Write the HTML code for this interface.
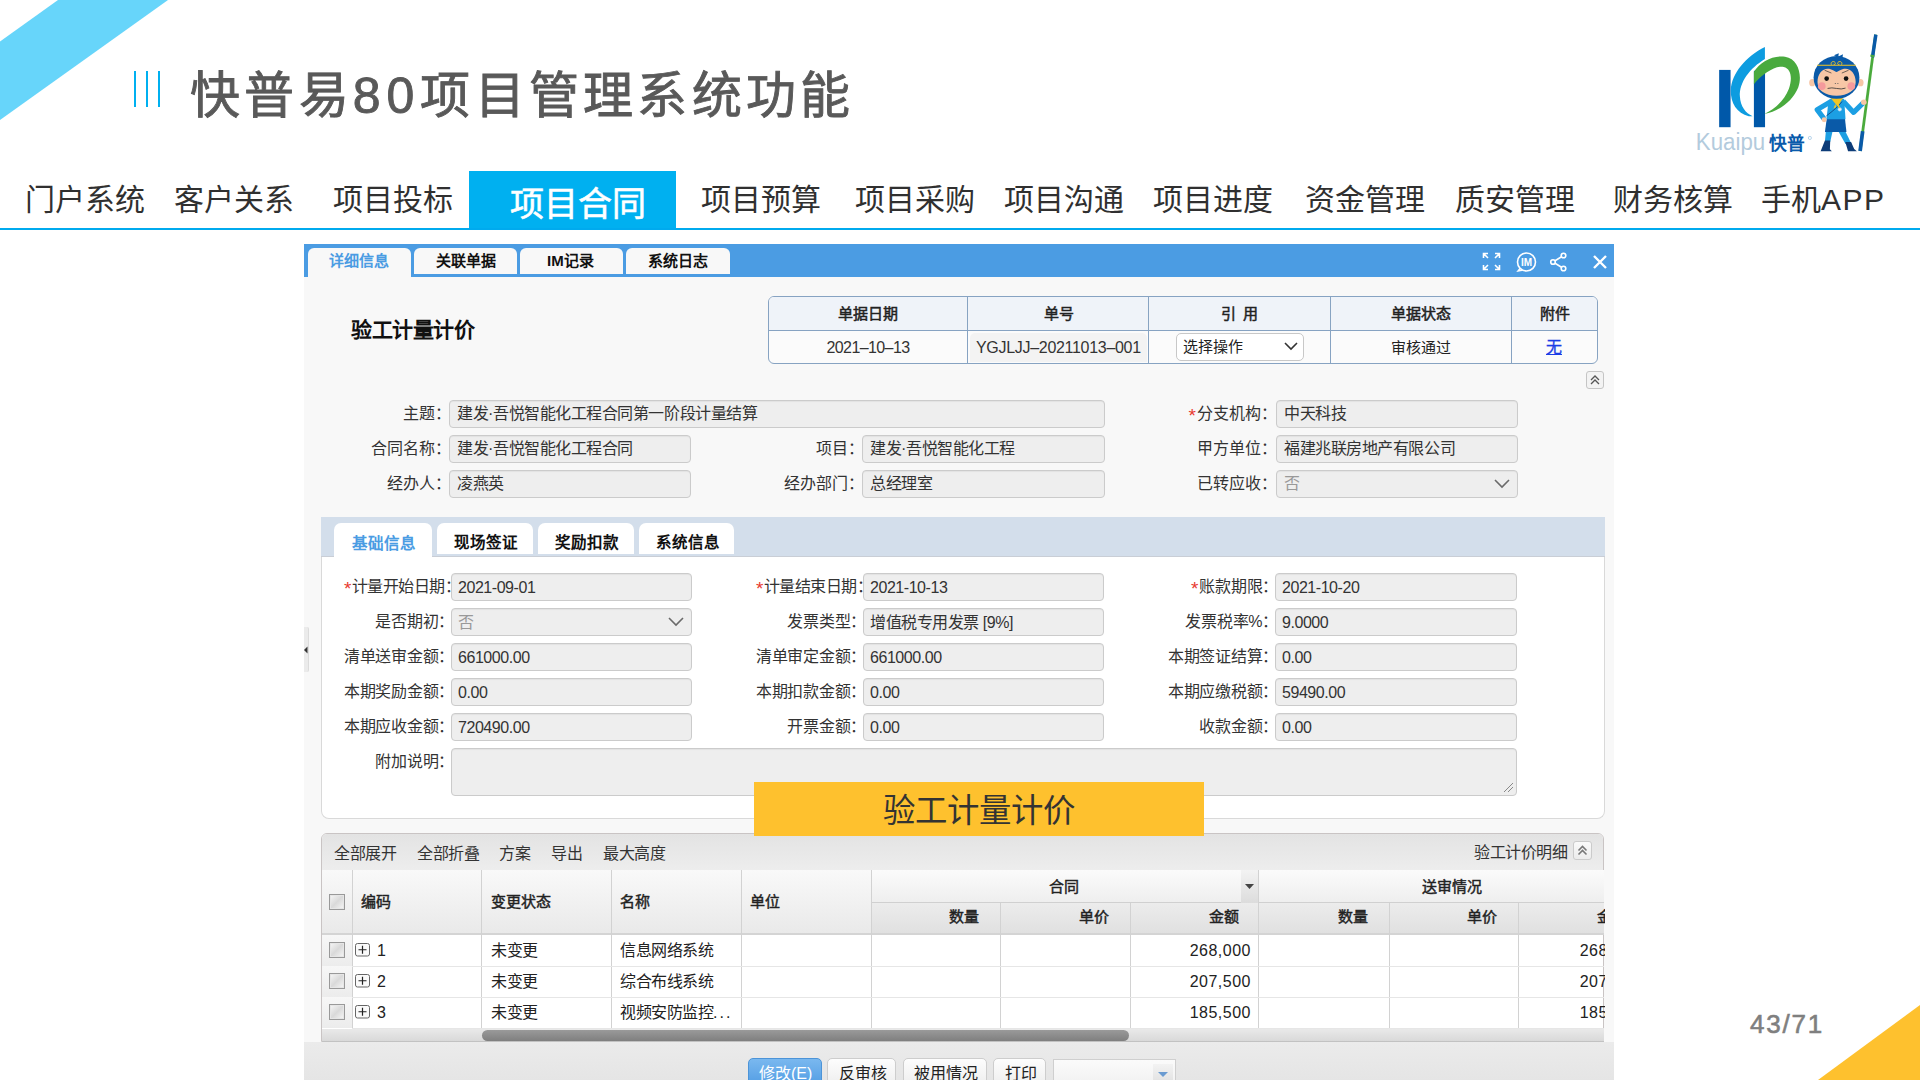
<!DOCTYPE html>
<html lang="zh-CN">
<head>
<meta charset="utf-8">
<title>slide</title>
<style>
html,body{margin:0;padding:0;width:1920px;height:1080px;overflow:hidden;background:#fff;font-family:"Liberation Sans",sans-serif;}
.a{position:absolute;white-space:nowrap;line-height:1;}
.nav{position:absolute;top:184px;font-size:30px;color:#303030;line-height:32px;}

.sc{position:absolute;left:304px;top:244px;width:1310px;height:836px;background:#f8f8f8;overflow:hidden;}
.pg{position:absolute;left:-304px;top:-244px;width:1920px;height:1080px;}
.t{position:absolute;white-space:nowrap;line-height:1;}
.tab1{position:absolute;top:248px;height:26px;background:#f8f8f8;border-radius:6px 6px 0 0;}
.tb{position:absolute;white-space:nowrap;top:254px;font-size:15px;font-weight:bold;color:#111;line-height:14px;}
.ht{position:absolute;white-space:nowrap;font-size:15px;font-weight:400;-webkit-text-stroke:0.5px #222;color:#222;line-height:15px;text-align:center;}
.lb{position:absolute;white-space:nowrap;font-size:16px;letter-spacing:-0.25px;color:#333;line-height:15px;text-align:right;}
.in{position:absolute;background:#eeeeee;border:1px solid #cbcbcb;box-shadow:inset 0 1px 1px rgba(0,0,0,0.05);border-radius:4px;box-sizing:border-box;}
.iv{position:absolute;white-space:nowrap;font-size:16px;letter-spacing:-0.45px;color:#333;line-height:15px;}
.rq{color:#e8392f;font-size:19px;line-height:10px;position:relative;top:3px;margin-right:1px}
.gh{position:absolute;background:linear-gradient(#f9f9f9,#e9e9e9);}
.gh2{position:absolute;background:linear-gradient(#ececec,#e0e0e0);}
.vl{position:absolute;width:1px;background:#d2d2d2;}
.hl{position:absolute;height:1px;background:#e6e6e6;}
.gt{position:absolute;white-space:nowrap;font-size:16px;letter-spacing:-0.5px;line-height:15px;color:#222;}
.gb{position:absolute;white-space:nowrap;font-size:15px;line-height:15px;color:#222;font-weight:400;-webkit-text-stroke:0.45px #222;}
.cb{position:absolute;width:16px;height:16px;border:1px solid #999;box-sizing:border-box;background:linear-gradient(135deg,#f7f7f7,#d9d9d9 50%,#f7f7f7);box-shadow:inset 0 0 0 1px #e6e6e6;}
.btn{position:absolute;top:1058px;height:30px;border:1px solid #cdcdcd;border-radius:5px;box-sizing:border-box;background:linear-gradient(#fdfdfd,#ededed);}
.bt{position:absolute;top:1066px;white-space:nowrap;font-size:16px;line-height:16px;color:#222;}
</style>
</head>
<body>
<!-- top-left blue band -->
<svg class="a" style="left:0;top:0" width="200" height="140"><polygon points="58,0 168,0 0,120 0,41.5" fill="#67d5fa"/></svg>
<!-- bottom-right yellow triangle -->
<svg class="a" style="left:1800px;top:990px" width="120" height="90"><polygon points="18,90 120,15 120,90" fill="#fec12e"/></svg>
<!-- title bars -->
<div class="a" style="left:134px;top:71px;width:2px;height:36px;background:#00b0f0"></div>
<div class="a" style="left:146px;top:71px;width:2px;height:36px;background:#00b0f0"></div>
<div class="a" style="left:158px;top:71px;width:2px;height:36px;background:#00b0f0"></div>
<div class="a" id="title" style="left:190px;top:71px;font-size:50px;font-weight:400;-webkit-text-stroke:0.9px #595959;color:#595959;letter-spacing:4.25px;">快普易<span style="letter-spacing:6px">80</span>项目管理系统功能</div>

<!-- nav -->
<div class="nav" style="left:25px">门户系统</div>
<div class="nav" style="left:174px">客户关系</div>
<div class="nav" style="left:333px">项目投标</div>
<div class="a" style="left:469px;top:171px;width:207px;height:57px;background:#00b0f0"></div>
<div class="nav" style="left:510px;top:186px;font-size:34px;color:#fff;line-height:36px;-webkit-text-stroke:0.6px #fff">项目合同</div>
<div class="nav" style="left:701px">项目预算</div>
<div class="nav" style="left:855px">项目采购</div>
<div class="nav" style="left:1004px">项目沟通</div>
<div class="nav" style="left:1153px">项目进度</div>
<div class="nav" style="left:1305px">资金管理</div>
<div class="nav" style="left:1455px">质安管理</div>
<div class="nav" style="left:1613px">财务核算</div>
<div class="nav" style="left:1761px">手机<span style="letter-spacing:1.5px">APP</span></div>
<div class="a" style="left:0;top:228px;width:1920px;height:2px;background:#00aaee"></div>

<!-- logo -->
<svg class="a" style="left:1680px;top:20px" width="220" height="140" viewBox="0 0 1697 1080">
 <rect x="302" y="385" width="88" height="442" fill="#0058a9"/>
 <path d="M655 208 L655 300 C540 370 455 480 462 590 C466 665 505 718 560 742 L530 742 C440 720 388 640 392 540 C398 410 510 280 655 208 Z" fill="#0d9ce0"/>
 <rect x="570" y="392" width="86" height="435" fill="#0058a9"/>
 <path d="M570 400 L570 495 C640 410 740 350 800 362 C858 376 868 450 840 530 C805 620 730 690 650 725 C770 705 870 620 912 520 C945 430 915 300 810 283 C720 270 620 320 570 400 Z" fill="#49aa3e"/>
 <text x="122" y="1004" font-family="Liberation Sans" font-size="180" fill="#b3cbdd" textLength="535" lengthAdjust="spacingAndGlyphs">Kuaipu</text>
 <text x="690" y="1004" font-family="Liberation Sans" font-weight="bold" font-size="138" fill="#0a5bab" textLength="275" lengthAdjust="spacingAndGlyphs">快普</text>
 <circle cx="1002" cy="910" r="12" fill="none" stroke="#7ab0d8" stroke-width="4"/>
</svg>
<svg class="a" style="left:1805px;top:30px" width="80" height="125" viewBox="0 0 691 1080">
 <path d="M610 40 L476 1045" stroke="#4aaa3c" stroke-width="24"/>
 <path d="M612 40 L583 235" stroke="#0a5aa8" stroke-width="30"/>
 <path d="M583 215 L580 232" stroke="#4aaa3c" stroke-width="34"/>
 <path d="M498 875 L476 1045" stroke="#0a5aa8" stroke-width="32"/>
 <path d="M180 875 L238 875 L218 965 L172 965 Z" fill="#1c9fe3"/>
 <path d="M288 875 L348 875 L402 985 L350 985 Z" fill="#1c9fe3"/>
 <path d="M172 955 L218 955 L215 1030 L232 1048 L135 1048 Z" fill="#0d3c78"/>
 <path d="M348 968 L398 968 L425 1028 L448 1048 L372 1048 Z" fill="#0d3c78"/>
 <path d="M188 765 L345 765 L358 882 L172 882 Z" fill="#0a5aa8"/>
 <path d="M215 595 L338 595 L350 772 L185 772 L200 640 Z" fill="#1c9fe3"/>
 <path d="M225 618 L105 688 L165 768" stroke="#1c9fe3" stroke-width="44" fill="none" stroke-linejoin="round"/>
 <path d="M330 615 L420 712 L505 628" stroke="#1c9fe3" stroke-width="44" fill="none" stroke-linejoin="round"/>
 <path d="M320 618 C290 660 240 700 185 742" stroke="#0d3c78" stroke-width="7" fill="none"/>
 <circle cx="300" cy="685" r="16" fill="#e6f3fb" stroke="#8cc7ea" stroke-width="4"/>
 <circle cx="508" cy="625" r="24" fill="#f7c6a6"/>
 <circle cx="165" cy="775" r="21" fill="#f7c6a6"/>
 <path d="M222 588 L328 588 L282 660 Z" fill="#f3c623"/>
 <path d="M262 640 L245 680 L270 665 Z M290 640 L305 680 L282 665 Z" fill="#f3c623"/>
 <ellipse cx="62" cy="455" rx="26" ry="32" fill="#f7c6a6"/>
 <ellipse cx="480" cy="455" rx="26" ry="32" fill="#f7c6a6"/>
 <path d="M250 218 L292 200 L288 228 L328 210 L322 250 Z" fill="#0a5aa8"/>
 <ellipse cx="272" cy="410" rx="198" ry="185" fill="#0a5aa8"/>
 <path d="M108 450 C108 380 150 335 195 335 C235 335 255 360 272 362 C290 360 310 335 350 335 C395 335 438 380 438 450 C438 525 370 568 272 568 C175 568 108 525 108 450 Z" fill="#f7c6a6"/>
 <circle cx="145" cy="485" r="33" fill="#f59a9c"/>
 <circle cx="400" cy="485" r="33" fill="#f59a9c"/>
 <circle cx="187" cy="420" r="20" fill="#111"/>
 <circle cx="355" cy="420" r="20" fill="#111"/>
 <path d="M170 348 L228 372 M318 372 L376 348" stroke="#333" stroke-width="6"/>
 <circle cx="262" cy="462" r="5" fill="#555"/><circle cx="284" cy="462" r="5" fill="#555"/>
 <path d="M195 505 Q230 495 272 505 Q315 515 350 502" stroke="#333" stroke-width="7" fill="none"/>
 <path d="M105 305 L438 305" stroke="#f3c623" stroke-width="9"/>
 <path d="M228 300 C215 270 260 262 262 288 C262 300 250 302 246 292 M316 300 C330 270 285 262 282 288 C282 300 295 302 299 292" stroke="#f3c623" stroke-width="8" fill="none"/>
</svg>
<!-- page number -->
<div class="a" style="left:1750px;top:1011px;font-size:26px;color:#7f7f7f;letter-spacing:1.8px;-webkit-text-stroke:0.6px #7f7f7f">43/71</div>

<!-- screenshot -->
<div class="sc" id="sc">
<div class="pg">
<!-- header bar -->
<div class="t" style="left:304px;top:244px;width:1310px;height:33px;background:#4b9ce3"></div>
<div class="tab1" style="left:308px;width:103px;height:30px"></div>
<div class="tab1" style="left:414px;width:103px;height:26px"></div>
<div class="tab1" style="left:520px;width:103px;height:26px"></div>
<div class="tab1" style="left:626px;width:104px;height:26px"></div>
<div class="tb" style="left:329px;color:#4b9ce3">详细信息</div>
<div class="tb" style="left:436px">关联单据</div>
<div class="tb" style="left:547px">IM记录</div>
<div class="tb" style="left:648px">系统日志</div>
<!-- header icons -->
<svg class="t" style="left:1480px;top:250px" width="135" height="24" viewBox="0 0 135 24">
 <g fill="none" stroke="#fff" stroke-width="1.6">
  <path d="M3.5 8V3.5H8 M3.5 3.5l4.5 4.5 M15 3.5h4.5V8 M19.5 3.5l-4.5 4.5 M3.5 15v4.5H8 M3.5 19.5l4.5-4.5 M19.5 15v4.5H15 M19.5 19.5l-4.5-4.5"/>
  <circle cx="46.5" cy="12" r="9"/><path d="M40 18.5l-2 2.5 4-0.8" stroke-width="1.4"/>
  <path d="M83.5 5.5L73 12l10.5 6.5"/>
  <circle cx="83.5" cy="5.5" r="2.3" fill="#4b9ce3"/>
  <circle cx="73" cy="12" r="2.3" fill="#4b9ce3"/>
  <circle cx="83.5" cy="18.5" r="2.3" fill="#4b9ce3"/>
  <path d="M114 6l12 12 M126 6l-12 12" stroke-width="2.4"/>
 </g>
 <text x="46.5" y="16" font-family="Liberation Sans" font-weight="bold" font-size="10" fill="#fff" text-anchor="middle">IM</text>
</svg>
<!-- title -->
<div class="t" style="left:351px;top:319px;font-size:21px;letter-spacing:-0.4px;font-weight:bold;color:#111">验工计量计价</div>
<!-- header table -->
<div class="t" style="left:768px;top:296px;width:830px;height:68px;border:1px solid #87a3c2;border-radius:6px;box-sizing:border-box;background:#fbfbfb;overflow:hidden">
 <div style="position:absolute;left:0;top:0;width:830px;height:33px;background:#eff3f9;border-bottom:1px solid #87a3c2"></div>
 <div style="position:absolute;left:198px;top:0;width:1px;height:68px;background:#87a3c2"></div>
 <div style="position:absolute;left:379px;top:0;width:1px;height:68px;background:#87a3c2"></div>
 <div style="position:absolute;left:561px;top:0;width:1px;height:68px;background:#87a3c2"></div>
 <div style="position:absolute;left:742px;top:0;width:1px;height:68px;background:#87a3c2"></div>
</div>
<div class="ht" style="left:768px;top:306px;width:200px">单据日期</div>
<div class="ht" style="left:968px;top:306px;width:181px">单号</div>
<div class="ht" style="left:1149px;top:306px;width:181px">引<span style="letter-spacing:3px"> </span>用</div>
<div class="ht" style="left:1330px;top:306px;width:181px">单据状态</div>
<div class="ht" style="left:1511px;top:306px;width:87px">附件</div>
<div class="t" style="left:768px;top:340px;width:200px;text-align:center;font-size:16px;letter-spacing:-0.6px;color:#333">2021–10–13</div>
<div class="t" style="left:970px;top:333px;width:177px;height:29px;background:#f3f3f3;border-radius:5px 5px 0 0"></div>
<div class="t" style="left:976px;top:340px;font-size:16px;letter-spacing:-0.3px;color:#333">YGJLJJ–20211013–001</div>
<div class="t" style="left:1176px;top:333px;width:128px;height:28px;background:#fff;border:1px solid #c8c8c8;border-radius:5px;box-sizing:border-box"></div>
<div class="t" style="left:1183px;top:339px;font-size:15px;color:#222">选择操作</div>
<svg class="t" style="left:1283px;top:340px" width="16" height="12"><path d="M2 3l6 6 6-6" fill="none" stroke="#333" stroke-width="1.6"/></svg>
<div class="t" style="left:1330px;top:340px;width:181px;text-align:center;font-size:15px;color:#222">审核通过</div>
<div class="t" style="left:1546px;top:340px;font-size:16px;color:#1a3de6;text-decoration:underline;-webkit-text-stroke:0.3px #1a3de6">无</div>
<!-- collapse icon -->
<div class="t" style="left:1586px;top:371px;width:18px;height:18px;border:1px solid #c5c5c5;border-radius:3px;box-sizing:border-box;background:#f3f3f3"></div>
<svg class="t" style="left:1586px;top:371px" width="18" height="18"><path d="M5 9l4-4 4 4 M5 13l4-4 4 4" fill="none" stroke="#555" stroke-width="1.3"/></svg>

<!-- section 1 form -->
<div class="lb" style="left:311px;width:140px;top:406px;letter-spacing:0">主题：</div>
<div class="in" style="left:449px;top:400px;width:656px;height:28px"></div>
<div class="iv" style="left:457px;top:406px">建发·吾悦智能化工程合同第一阶段计量结算</div>
<div class="lb" style="left:1137px;width:140px;top:406px;letter-spacing:0"><span class="rq">*</span>分支机构：</div>
<div class="in" style="left:1276px;top:400px;width:242px;height:28px"></div>
<div class="iv" style="left:1284px;top:406px">中天科技</div>

<div class="lb" style="left:311px;width:140px;top:441px;letter-spacing:0">合同名称：</div>
<div class="in" style="left:449px;top:435px;width:242px;height:28px"></div>
<div class="iv" style="left:457px;top:441px">建发·吾悦智能化工程合同</div>
<div class="lb" style="left:724px;width:140px;top:441px;letter-spacing:0">项目：</div>
<div class="in" style="left:862px;top:435px;width:243px;height:28px"></div>
<div class="iv" style="left:870px;top:441px">建发·吾悦智能化工程</div>
<div class="lb" style="left:1137px;width:140px;top:441px;letter-spacing:0">甲方单位：</div>
<div class="in" style="left:1276px;top:435px;width:242px;height:28px"></div>
<div class="iv" style="left:1284px;top:441px">福建兆联房地产有限公司</div>

<div class="lb" style="left:311px;width:140px;top:476px;letter-spacing:0">经办人：</div>
<div class="in" style="left:449px;top:470px;width:242px;height:28px"></div>
<div class="iv" style="left:457px;top:476px">凌燕英</div>
<div class="lb" style="left:724px;width:140px;top:476px;letter-spacing:0">经办部门：</div>
<div class="in" style="left:862px;top:470px;width:243px;height:28px"></div>
<div class="iv" style="left:870px;top:476px">总经理室</div>
<div class="lb" style="left:1137px;width:140px;top:476px;letter-spacing:0">已转应收：</div>
<div class="in" style="left:1276px;top:470px;width:242px;height:28px"></div>
<div class="iv" style="left:1284px;top:476px;color:#999">否</div>
<svg class="t" style="left:1493px;top:476px" width="18" height="14"><path d="M2 4l7 7 7-7" fill="none" stroke="#6a6a6a" stroke-width="1.6"/></svg>
<!-- section 2 -->
<div class="t" style="left:321px;top:517px;width:1284px;height:40px;background:#d3deeb;border-bottom:1px solid #c9ced6;box-sizing:border-box"></div>
<div class="t" style="left:334px;top:523px;width:98px;height:35px;background:#fff;border-radius:7px 7px 0 0"></div>
<div class="t" style="left:437px;top:523px;width:96px;height:31px;background:#fff;border-radius:7px 7px 0 0"></div>
<div class="t" style="left:538px;top:523px;width:96px;height:31px;background:#fff;border-radius:7px 7px 0 0"></div>
<div class="t" style="left:639px;top:523px;width:95px;height:31px;background:#fff;border-radius:7px 7px 0 0"></div>
<div class="t" style="left:352px;top:536px;font-size:15.5px;font-weight:bold;color:#4b9ce3">基础信息</div>
<div class="t" style="left:454px;top:535px;font-size:15.5px;font-weight:bold;color:#111">现场签证</div>
<div class="t" style="left:555px;top:535px;font-size:15.5px;font-weight:bold;color:#111">奖励扣款</div>
<div class="t" style="left:656px;top:535px;font-size:15.5px;font-weight:bold;color:#111">系统信息</div>
<div class="t" style="left:321px;top:557px;width:1284px;height:262px;background:#fff;border:1px solid #d9d9d9;border-top:none;border-radius:0 0 8px 8px;box-sizing:border-box"></div>
<div class="t" style="left:334px;top:556px;width:98px;height:2px;background:#fff"></div>
<div class="lb" style="left:344px;width:107px;top:579px;letter-spacing:-0.5px"><span class="rq">*</span>计量开始日期：</div>
<div class="in" style="left:451px;top:573px;width:241px;height:28px"></div>
<div class="iv" style="left:458px;top:580px">2021-09-01</div>
<div class="lb" style="left:756px;width:106px;top:579px;letter-spacing:-0.5px"><span class="rq">*</span>计量结束日期：</div>
<div class="in" style="left:863px;top:573px;width:241px;height:28px"></div>
<div class="iv" style="left:870px;top:580px">2021-10-13</div>
<div class="lb" style="left:1138px;width:140px;top:579px"><span class="rq">*</span>账款期限：</div>
<div class="in" style="left:1275px;top:573px;width:242px;height:28px"></div>
<div class="iv" style="left:1282px;top:580px">2021-10-20</div>
<div class="lb" style="left:314px;width:140px;top:614px">是否期初：</div>
<div class="in" style="left:451px;top:608px;width:241px;height:28px"></div>
<div class="iv" style="left:458px;top:615px;color:#999">否</div>
<svg class="t" style="left:667px;top:614px" width="18" height="14"><path d="M2 4l7 7 7-7" fill="none" stroke="#6a6a6a" stroke-width="1.6"/></svg>
<div class="lb" style="left:726px;width:140px;top:614px">发票类型：</div>
<div class="in" style="left:863px;top:608px;width:241px;height:28px"></div>
<div class="iv" style="left:870px;top:615px">增值税专用发票 [9%]</div>
<div class="lb" style="left:1138px;width:140px;top:614px">发票税率%：</div>
<div class="in" style="left:1275px;top:608px;width:242px;height:28px"></div>
<div class="iv" style="left:1282px;top:615px">9.0000</div>
<div class="lb" style="left:314px;width:140px;top:649px">清单送审金额：</div>
<div class="in" style="left:451px;top:643px;width:241px;height:28px"></div>
<div class="iv" style="left:458px;top:650px">661000.00</div>
<div class="lb" style="left:726px;width:140px;top:649px">清单审定金额：</div>
<div class="in" style="left:863px;top:643px;width:241px;height:28px"></div>
<div class="iv" style="left:870px;top:650px">661000.00</div>
<div class="lb" style="left:1138px;width:140px;top:649px">本期签证结算：</div>
<div class="in" style="left:1275px;top:643px;width:242px;height:28px"></div>
<div class="iv" style="left:1282px;top:650px">0.00</div>
<div class="lb" style="left:314px;width:140px;top:684px">本期奖励金额：</div>
<div class="in" style="left:451px;top:678px;width:241px;height:28px"></div>
<div class="iv" style="left:458px;top:685px">0.00</div>
<div class="lb" style="left:726px;width:140px;top:684px">本期扣款金额：</div>
<div class="in" style="left:863px;top:678px;width:241px;height:28px"></div>
<div class="iv" style="left:870px;top:685px">0.00</div>
<div class="lb" style="left:1138px;width:140px;top:684px">本期应缴税额：</div>
<div class="in" style="left:1275px;top:678px;width:242px;height:28px"></div>
<div class="iv" style="left:1282px;top:685px">59490.00</div>
<div class="lb" style="left:314px;width:140px;top:719px">本期应收金额：</div>
<div class="in" style="left:451px;top:713px;width:241px;height:28px"></div>
<div class="iv" style="left:458px;top:720px">720490.00</div>
<div class="lb" style="left:726px;width:140px;top:719px">开票金额：</div>
<div class="in" style="left:863px;top:713px;width:241px;height:28px"></div>
<div class="iv" style="left:870px;top:720px">0.00</div>
<div class="lb" style="left:1138px;width:140px;top:719px">收款金额：</div>
<div class="in" style="left:1275px;top:713px;width:242px;height:28px"></div>
<div class="iv" style="left:1282px;top:720px">0.00</div>
<div class="lb" style="left:314px;width:140px;top:754px">附加说明：</div>
<div class="in" style="left:451px;top:748px;width:1066px;height:48px"></div>
<svg class="t" style="left:1502px;top:781px" width="12" height="12"><path d="M2 11L11 2 M6 11l5-5" stroke="#888" stroke-width="1"/></svg>
<div class="t" style="left:304px;top:627px;width:4px;height:45px;background:#ebebeb;border-right:1px solid #dcdcdc;border-radius:0 2px 2px 0"></div>
<svg class="t" style="left:304px;top:646px" width="5" height="8"><path d="M0 4l3.5-3.5v7z" fill="#333"/></svg>
<!-- section 3 grid -->
<div class="t" style="left:321px;top:833px;width:1283px;height:209px;border:1px solid #c9c4c4;border-radius:6px 6px 0 0;box-sizing:border-box;background:#fff;overflow:hidden">
 <div style="position:absolute;left:0;top:0;width:1283px;height:36px;background:linear-gradient(#e3e3e3,#ededed);border-bottom:1px solid #c6c6c6"></div>
</div>
<div class="gt" style="left:334px;top:846px;color:#333">全部展开</div>
<div class="gt" style="left:417px;top:846px;color:#333">全部折叠</div>
<div class="gt" style="left:499px;top:846px;color:#333">方案</div>
<div class="gt" style="left:551px;top:846px;color:#333">导出</div>
<div class="gt" style="left:603px;top:846px;color:#333">最大高度</div>
<div class="gt" style="left:1474px;top:845px;color:#333">验工计价明细</div>
<div class="t" style="left:1573px;top:841px;width:19px;height:19px;border:1px solid #cbcbcb;border-radius:3px;box-sizing:border-box;background:linear-gradient(#fafafa,#ececec)"></div>
<svg class="t" style="left:1573px;top:841px" width="19" height="19"><path d="M5.5 9.5l4-4 4 4 M5.5 13.5l4-4 4 4" fill="none" stroke="#777" stroke-width="1.6"/></svg>
<!-- header -->
<div class="gh" style="left:322px;top:870px;width:1282px;height:64px"></div>
<div class="gh" style="left:871px;top:870px;width:733px;height:33px;background:linear-gradient(#fbfbfb,#eeeeee)"></div>
<div class="gh2" style="left:871px;top:903px;width:733px;height:31px"></div>
<div class="t" style="left:871px;top:902px;width:733px;height:1px;background:#d0d0d0"></div>
<div class="t" style="left:322px;top:933px;width:1282px;height:2px;background:#d4d4d4"></div>
<div class="t" style="left:1241px;top:870px;width:17px;height:33px;background:linear-gradient(#f3f3f3,#dcdcdc)"></div>
<svg class="t" style="left:1244px;top:883px" width="11" height="7"><path d="M1 1h9l-4.5 5z" fill="#444"/></svg>
<div class="vl" style="left:352px;top:870px;height:159px"></div>
<div class="vl" style="left:481px;top:870px;height:159px"></div>
<div class="vl" style="left:611px;top:870px;height:159px"></div>
<div class="vl" style="left:741px;top:870px;height:159px"></div>
<div class="vl" style="left:871px;top:870px;height:159px"></div>
<div class="vl" style="left:1000px;top:903px;height:126px"></div>
<div class="vl" style="left:1130px;top:903px;height:126px"></div>
<div class="vl" style="left:1389px;top:903px;height:126px"></div>
<div class="vl" style="left:1518px;top:903px;height:126px"></div>
<div class="vl" style="left:1258px;top:870px;height:159px"></div>
<div class="cb" style="left:329px;top:894px"></div>
<div class="gb" style="left:361px;top:894px">编码</div>
<div class="gb" style="left:491px;top:894px">变更状态</div>
<div class="gb" style="left:620px;top:894px">名称</div>
<div class="gb" style="left:750px;top:894px">单位</div>
<div class="gb" style="left:1049px;top:879px">合同</div>
<div class="gb" style="left:1422px;top:879px">送审情况</div>
<div class="gb" style="left:949px;top:909px">数量</div>
<div class="gb" style="left:1079px;top:909px">单价</div>
<div class="gb" style="left:1209px;top:909px">金额</div>
<div class="gb" style="left:1338px;top:909px">数量</div>
<div class="gb" style="left:1467px;top:909px">单价</div>
<div class="gb" style="left:1597px;top:909px">金额</div>
<div class="t" style="left:322px;top:935px;width:30px;height:31px;background:linear-gradient(#f7f7f7,#ececec)"></div>
<div class="hl" style="left:352px;top:966px;width:1252px"></div>
<div class="cb" style="left:329px;top:942px"></div>
<svg class="t" style="left:355px;top:943px" width="16" height="14"><rect x="0.5" y="0.5" width="14" height="12.5" rx="2" fill="#fafafa" stroke="#666"/><path d="M3.5 6.75h8 M7.5 2.8v8" stroke="#222" stroke-width="1.2"/></svg>
<div class="gt" style="left:377px;top:943px;font-size:16px">1</div>
<div class="gt" style="left:491px;top:943px">未变更</div>
<div class="gt" style="left:620px;top:943px">信息网络系统</div>
<div class="gt" style="left:1151px;top:943px;width:100px;text-align:right;font-size:16px;letter-spacing:0.5px">268,000</div>
<div class="gt" style="left:1541px;top:943px;width:100px;text-align:right;font-size:16px;letter-spacing:0.5px">268,000</div>
<div class="t" style="left:322px;top:966px;width:30px;height:31px;background:linear-gradient(#f7f7f7,#ececec)"></div>
<div class="hl" style="left:352px;top:997px;width:1252px"></div>
<div class="cb" style="left:329px;top:973px"></div>
<svg class="t" style="left:355px;top:974px" width="16" height="14"><rect x="0.5" y="0.5" width="14" height="12.5" rx="2" fill="#fafafa" stroke="#666"/><path d="M3.5 6.75h8 M7.5 2.8v8" stroke="#222" stroke-width="1.2"/></svg>
<div class="gt" style="left:377px;top:974px;font-size:16px">2</div>
<div class="gt" style="left:491px;top:974px">未变更</div>
<div class="gt" style="left:620px;top:974px">综合布线系统</div>
<div class="gt" style="left:1151px;top:974px;width:100px;text-align:right;font-size:16px;letter-spacing:0.5px">207,500</div>
<div class="gt" style="left:1541px;top:974px;width:100px;text-align:right;font-size:16px;letter-spacing:0.5px">207,500</div>
<div class="t" style="left:322px;top:997px;width:30px;height:31px;background:linear-gradient(#f7f7f7,#ececec)"></div>
<div class="hl" style="left:352px;top:1028px;width:1252px"></div>
<div class="cb" style="left:329px;top:1004px"></div>
<svg class="t" style="left:355px;top:1005px" width="16" height="14"><rect x="0.5" y="0.5" width="14" height="12.5" rx="2" fill="#fafafa" stroke="#666"/><path d="M3.5 6.75h8 M7.5 2.8v8" stroke="#222" stroke-width="1.2"/></svg>
<div class="gt" style="left:377px;top:1005px;font-size:16px">3</div>
<div class="gt" style="left:491px;top:1005px">未变更</div>
<div class="gt" style="left:620px;top:1005px">视频安防监控<span style="letter-spacing:2px">...</span></div>
<div class="gt" style="left:1151px;top:1005px;width:100px;text-align:right;font-size:16px;letter-spacing:0.5px">185,500</div>
<div class="gt" style="left:1541px;top:1005px;width:100px;text-align:right;font-size:16px;letter-spacing:0.5px">185,500</div>
<div class="t" style="left:322px;top:1029px;width:1282px;height:13px;background:linear-gradient(#e9e9e9,#d9d9d9);border-bottom:1px solid #c2c2c2;box-sizing:border-box"></div>
<div class="t" style="left:482px;top:1030px;width:647px;height:11px;border-radius:6px;background:linear-gradient(#9a9a9a,#7f7f7f)"></div>
<div class="t" style="left:1605px;top:833px;width:10px;height:209px;background:#f8f8f8"></div>
<div class="t" style="left:304px;top:1042px;width:1310px;height:38px;background:linear-gradient(#ebebeb,#e5e5e5)"></div>
<div class="btn" style="left:748px;width:74px;border-color:#4c94d8;background:linear-gradient(#7ab8ef,#4f9be3)"></div>
<div class="bt" style="left:759px;color:#fff">修改(E)</div>
<div class="btn" style="left:827px;width:69px"></div>
<div class="bt" style="left:839px">反审核</div>
<div class="btn" style="left:903px;width:84px"></div>
<div class="bt" style="left:914px">被用情况</div>
<div class="btn" style="left:993px;width:53px"></div>
<div class="bt" style="left:1005px">打印</div>
<div class="t" style="left:1053px;top:1059px;width:123px;height:30px;border:1px solid #cfcfcf;box-sizing:border-box;background:linear-gradient(#fbfbfb,#f0f0f0)"></div>
<div class="t" style="left:1153px;top:1064px;width:20px;height:20px;background:linear-gradient(#f3f3f3,#e0e0e0)"></div>
<svg class="t" style="left:1158px;top:1072px" width="11" height="6"><path d="M0 0h10l-5 5z" fill="#6a9bd1"/></svg>
<div class="t" style="left:754px;top:782px;width:450px;height:54px;background:#fec12e"></div>
<div class="t" style="left:754px;top:793px;width:450px;text-align:center;font-size:32.4px;line-height:36px;color:#333">验工计量计价</div>
</div>
</div>
</body>
</html>
